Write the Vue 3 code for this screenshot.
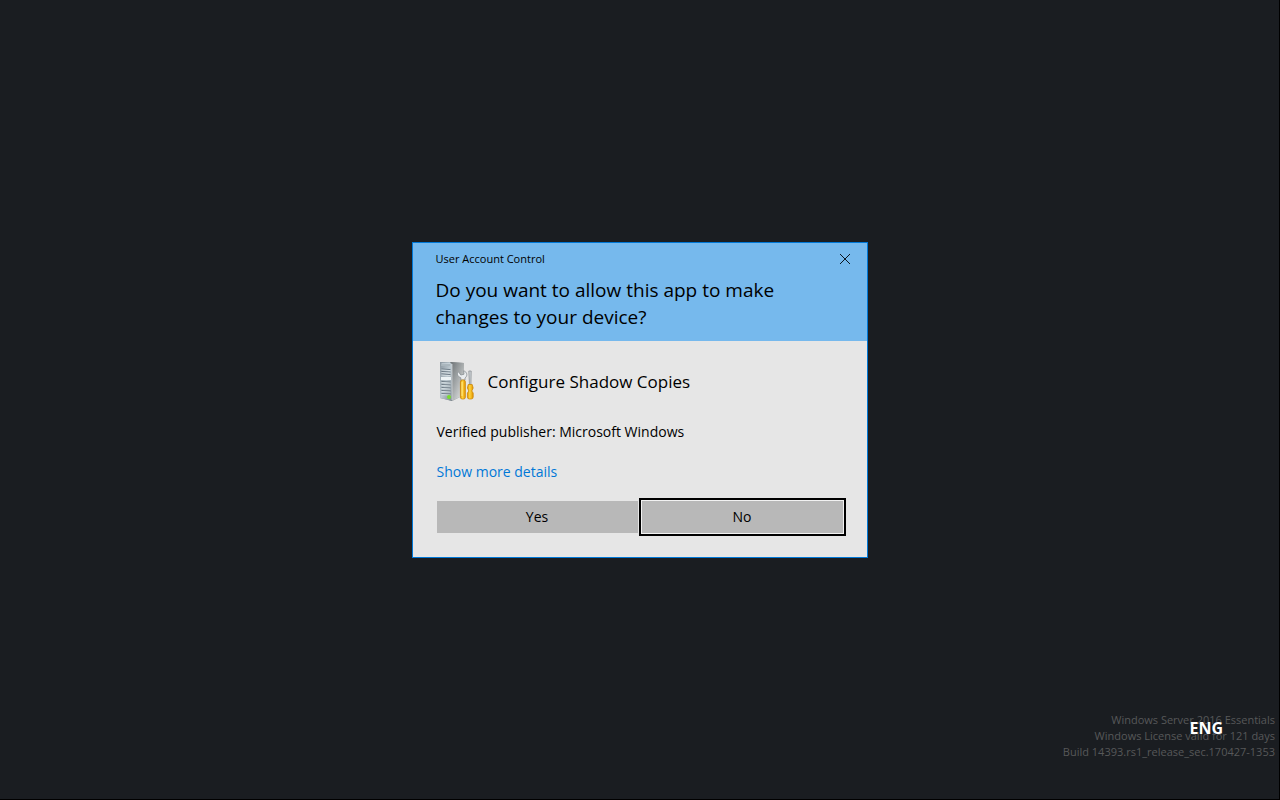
<script setup>
const watermark = [
  'Windows Server 2016 Essentials',
  'Windows License valid for 121 days',
  'Build 14393.rs1_release_sec.170427-1353',
]
const slots = [8, 10.5, 13, 20.5, 23.5, 26.5, 29.5, 32.5]
</script>

<template>
  <main class="desktop">
    <section class="dialog" role="dialog" aria-labelledby="question">
      <header class="banner">
        <div class="titlebar">
          <span class="caption">User Account Control</span>
          <button class="close" type="button" aria-label="Close">
            <svg width="12" height="12" viewBox="0 0 12 12" aria-hidden="true">
              <path d="M1 1 L11 11 M11 1 L1 11" fill="none" stroke="#0b1620" stroke-width="1" />
            </svg>
          </button>
        </div>
        <h1 id="question" class="question">Do you want to allow this app to make changes to your device?</h1>
      </header>
      <div class="content">
        <div class="app">
          <svg class="icon" width="40" height="42" viewBox="0 0 40 42" aria-hidden="true">
            <defs>
              <linearGradient id="front" x1="0" y1="0" x2="1" y2="1">
                <stop offset="0" stop-color="#8a969f" />
                <stop offset="0.5" stop-color="#bcc8cf" />
                <stop offset="1" stop-color="#7b8790" />
              </linearGradient>
              <linearGradient id="side" x1="0" y1="0" x2="1" y2="1">
                <stop offset="0" stop-color="#696f72" />
                <stop offset="0.5" stop-color="#a8acad" />
                <stop offset="1" stop-color="#eceeee" />
              </linearGradient>
              <linearGradient id="handle">
                <stop offset="0" stop-color="#dd9200" />
                <stop offset="0.4" stop-color="#ffd53c" />
                <stop offset="1" stop-color="#e39300" />
              </linearGradient>
            </defs>
            <path d="M3 1 L14 1 L27 2 L27 34 L15 40 L3 37 Z" fill="#8b9092" />
            <path d="M3 1 L13 1 L15 3 L15 40 L3 37 Z" fill="url(#front)" />
            <path d="M13 1 L27 2 L27 34 L15 40 L15 3 Z" fill="url(#side)" />
            <path d="M4.5 2.5 H13 V5 H4.5 Z" fill="#dbe5ea" />
            <path d="M4.5 4 H13" stroke="#63717b" stroke-width="0.8" />
            <path d="M4 16 H14 V19 H4 Z" fill="#edf3f5" />
            <g v-for="y in slots" :key="y">
              <path :d="`M4.5 ${y} L13.5 ${y + 0.6}`" stroke="#65737e" stroke-width="0.9" />
              <path :d="`M4.5 ${y + 1} L13.5 ${y + 1.6}`" stroke="#dce4e8" stroke-width="0.8" />
            </g>
            <path d="M15 3 V39" stroke="#d2d6d8" stroke-width="0.8" />
            <circle cx="12" cy="36" r="2" fill="#77dd2c" />
            <path d="M23.8 19 V16.8 C20.3 15.3 19.5 12.5 21.5 10.8 L23.8 14 L27 13.2 L26.6 9.8 C30.5 11 30.8 15 28 17 V19 Z" fill="#e9ecee" stroke="#888e92" stroke-width="0.8" />
            <rect x="23.4" y="19" width="5" height="19" rx="1.8" fill="url(#handle)" stroke="#c98200" stroke-width="0.7" />
            <path d="M25 21 V35" stroke="#ffe88c" stroke-width="1" />
            <path d="M31.8 10 H34.2 L33.9 24 H32.5 Z" fill="#cfd4d7" stroke="#7f8589" stroke-width="0.7" />
            <path d="M31.2 23.5 H35.2 L36.2 27 L34.8 30 L36.2 32 V36 Q36.2 38 34.2 38 H32.4 Q30.4 38 30.4 36 V32 L31.8 30 L30.4 27 Z" fill="url(#handle)" stroke="#c98200" stroke-width="0.7" />
          </svg>
          <h2 class="name">Configure Shadow Copies</h2>
        </div>
        <p class="publisher">Verified publisher: Microsoft Windows</p>
        <a class="details" href="#details">Show more details</a>
        <div class="actions">
          <button class="choice" type="button">Yes</button>
          <button class="choice selected" type="button">No</button>
        </div>
      </div>
    </section>
    <footer class="watermark">
      <div v-for="line in watermark" :key="line">{{ line }}</div>
      <span class="language">ENG</span>
    </footer>
  </main>
</template>

<style>
body {
  margin: 0;
  background: #1a1d21;
}
</style>

<style scoped>
.desktop {
  box-sizing: border-box;
  min-height: 100vh;
  display: grid;
  place-items: center;
  position: relative;
  background: #1a1d21;
  border-right: 1px solid #000;
  border-bottom: 1px solid #000;
  font-family: "Open Sans", "Noto Sans", sans-serif;
  color: #000;
}
.dialog {
  box-sizing: border-box;
  width: 456px;
  max-width: 100%;
  border: 1px solid #0078d7;
  background: #e6e6e6;
}
.banner {
  background: #76b9ed;
  padding: 0 0 10px 23px;
}
.titlebar {
  display: flex;
  justify-content: space-between;
  align-items: center;
  height: 32px;
  margin-bottom: 2px;
}
.caption {
  font-size: 11px;
  line-height: 16px;
}
.close {
  display: grid;
  place-items: center;
  width: 44px;
  height: 32px;
  padding: 0;
  border: 0;
  background: transparent;
}
.question {
  margin: 0;
  max-width: 370px;
  font-size: 19px;
  line-height: 27px;
  font-weight: 400;
}
.content {
  padding: 20px 24px 24px;
}
.app {
  display: flex;
  align-items: center;
  gap: 11px;
}
.icon {
  display: block;
}
.name {
  margin: 0;
  font-size: 17px;
  line-height: 24px;
  font-weight: 400;
}
.publisher {
  margin: 19px 0 20px;
  font-size: 14px;
  line-height: 20px;
}
.details {
  display: block;
  width: fit-content;
  font-size: 14px;
  line-height: 20px;
  color: #0078d7;
  text-decoration: none;
}
.actions {
  display: grid;
  grid-template-columns: 1fr 1fr;
  gap: 4px;
  margin-top: 19px;
}
.choice {
  height: 32px;
  padding: 0;
  border: 0;
  background: #b8b8b8;
  color: #000;
  font-family: inherit;
  font-size: 14px;
}
.selected {
  box-shadow: 0 0 0 1px #f2f2f2, 0 0 0 3px #000;
}
.watermark {
  position: absolute;
  right: 4px;
  bottom: 39px;
  font-size: 11px;
  line-height: 16px;
  text-align: right;
  color: #575859;
}
.language {
  position: absolute;
  right: 52px;
  top: 6px;
  font-size: 16px;
  line-height: 20px;
  font-weight: 700;
  color: #fff;
}
</style>
